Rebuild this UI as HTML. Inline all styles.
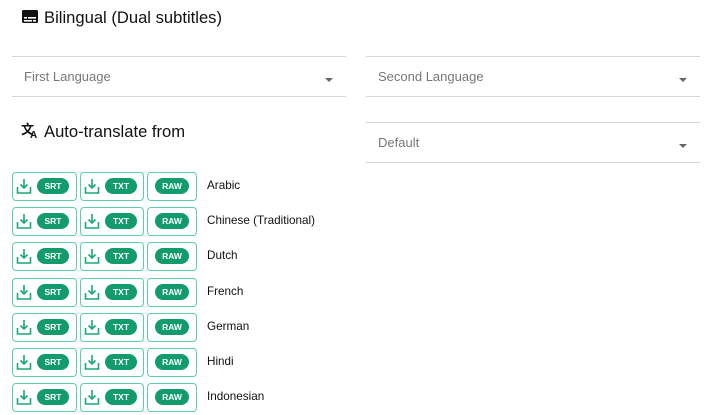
<!DOCTYPE html>
<html><head><style>
*{margin:0;padding:0;box-sizing:border-box}
body{width:720px;height:415px;background:#fff;font-family:"Liberation Sans",Arial,sans-serif;position:relative;overflow:hidden;color:#111}
.abs{position:absolute}
.h{font-size:16.6px;color:#111}
.line{position:absolute;height:1px;background:#d6d6d6}
.lbl{position:absolute;font-size:13px;color:#777}
.arr{position:absolute;width:0;height:0;border-left:4px solid transparent;border-right:4px solid transparent;border-top:4px solid #666}
.btn{position:absolute;height:29px;border:1.5px solid #5ccfa5;border-radius:4px}
.pill{position:absolute;top:5px;height:16px;border-radius:8px;background:#129c6c;color:#fff;font-size:8.5px;font-weight:bold;text-align:center;line-height:16px}
.dl{position:absolute;left:3px;top:5px}
.name{position:absolute;left:207px;font-size:11.7px;color:#111}
</style></head><body>
<svg class="abs" style="left:22px;top:10px" width="16" height="14" viewBox="0 0 16 14"><rect x="0" y="0" width="16" height="13" rx="1.5" fill="#111"/><rect x="2" y="7" width="3" height="1.6" fill="#fff"/><rect x="6" y="7" width="8" height="1.6" fill="#fff"/><rect x="2" y="10" width="8" height="1.6" fill="#fff"/><rect x="11" y="10" width="3" height="1.6" fill="#fff"/></svg>
<div class="abs h" style="left:44px;top:8px">Bilingual (Dual subtitles)</div>
<div class="line" style="left:12px;width:334px;top:56px"></div>
<div class="lbl" style="left:24px;top:69px">First Language</div>
<div class="arr" style="left:325px;top:78px"></div>
<div class="line" style="left:12px;width:334px;top:96px"></div>
<div class="line" style="left:366px;width:334px;top:56px"></div>
<div class="lbl" style="left:378px;top:69px">Second Language</div>
<div class="arr" style="left:679px;top:78px"></div>
<div class="line" style="left:366px;width:334px;top:96px"></div>
<svg class="abs" style="left:21px;top:122px" width="19" height="17" viewBox="0 0 19 17"><text x="0" y="12" font-size="13" font-weight="bold" font-family="Noto Sans CJK SC" fill="#111">文</text><text x="9" y="16" font-size="10" font-weight="bold" font-family="Liberation Sans" fill="#111">A</text></svg>
<div class="abs h" style="left:44px;top:122px">Auto-translate from</div>
<div class="line" style="left:366px;width:334px;top:122px"></div>
<div class="lbl" style="left:378px;top:135px">Default</div>
<div class="arr" style="left:679px;top:144px"></div>
<div class="line" style="left:366px;width:334px;top:162px"></div>
<div id="rows"></div>
<script>
var n=["Arabic","Chinese (Traditional)","Dutch","French","German","Hindi","Indonesian"],h="";
var dl='<svg class="dl" width="16" height="17" viewBox="0 0 16 17"><path d="M8 1v9M4.5 6.5L8 10l3.5-3.5M1.5 9v6h13V9" fill="none" stroke="#1aa876" stroke-width="1.6"/></svg>';
for(var i=0;i<7;i++){var t=172+i*35.2;
h+='<div class="btn" style="left:12px;width:65px;top:'+t+'px">'+dl+'<div class="pill" style="left:24px;width:32px">SRT</div></div>';
h+='<div class="btn" style="left:80px;width:64px;top:'+t+'px">'+dl+'<div class="pill" style="left:24px;width:32px">TXT</div></div>';
h+='<div class="btn" style="left:147px;width:50px;top:'+t+'px"><div class="pill" style="left:7px;width:34px">RAW</div></div>';
h+='<div class="name" style="top:'+(t+7)+'px">'+n[i]+'</div>';}
document.getElementById("rows").innerHTML=h;
</script>
</body></html>
